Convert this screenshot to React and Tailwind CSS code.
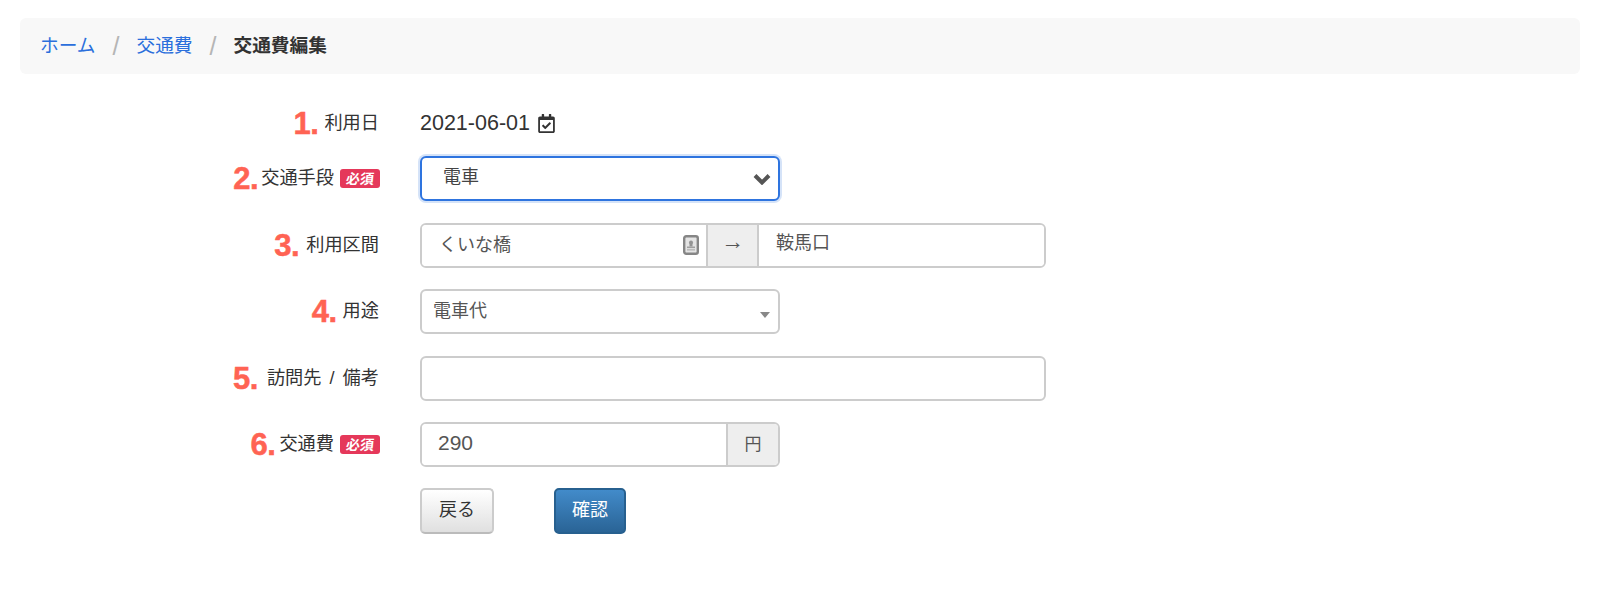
import React from "react";
import { FaRegCalendarCheck } from "react-icons/fa";

const font = '"Liberation Sans", "Noto Sans CJK JP", sans-serif';

function Req() {
  return (
    <span className="ml-[6px] flex h-[19px] w-[40px] items-center justify-center rounded-[3px] bg-[#e5385a] text-[14px] font-bold leading-none text-white">
      <span className="inline-block -skew-x-6">必須</span>
    </span>
  );
}

function Label({ n, text, req, gap }) {
  return (
    <div className="flex w-[380px] shrink-0 items-center justify-end">
      <span className={`${gap} text-[31px] font-bold leading-none tracking-[-0.5px] text-[#ff6353] [-webkit-text-stroke:0.5px_#ff6353]`}>{n}.</span>
      <span className="whitespace-nowrap text-[18.2px] leading-none text-[#333] [word-spacing:3px]">{text}</span>
      {req ? <Req /> : <span className="w-px" />}
    </div>
  );
}

function Row({ children }) {
  return <div className="flex h-[45px] items-center">{children}</div>;
}

export default function App() {
  return (
    <div className="h-[600px] w-[1600px] bg-white pt-[18px] text-[#333]" style={{ fontFamily: font }}>
      <nav className="mx-[20px] flex h-[56px] w-[1560px] items-center rounded-[6px] bg-[#f8f8f8] pl-[20px] text-[18.7px] leading-none">
        <a className="text-[#2b6fdc]">ホーム</a>
        <span className="mx-[17px] text-[25px] text-[#b5b5b5]">/</span>
        <a className="text-[#2b6fdc]">交通費</a>
        <span className="mx-[17px] text-[25px] text-[#b5b5b5]">/</span>
        <strong className="font-bold text-[#333]">交通費編集</strong>
      </nav>

      <form className="mt-[26.5px] flex flex-col gap-[21.5px]">
        <div className="mb-[-11px] flex h-[45px] items-center">
          <Label n="1" text="利用日" gap="mr-[6px]" />
          <div className="ml-[40px] flex items-center text-[21.5px] text-[#333]">
            2021-06-01
            <FaRegCalendarCheck className="ml-[7px] text-[19px] text-[#333]" />
          </div>
        </div>

        <Row>
          <Label n="2" text="交通手段" req gap="mr-[3px]" />
          <div className="relative ml-[40px] h-[45px] w-[360px]">
            <select className="h-full w-full appearance-none rounded-[6px] border-2 border-[#2e74df] bg-white pb-[2px] pl-[21px] text-[18px] text-[#444] shadow-[0_0_0_2px_#d5e3f8] outline-none">
              <option>電車</option>
            </select>
            <svg className="absolute right-[9px] top-[17px]" width="18" height="12" viewBox="0 0 18 12">
              <path d="M2 2.5 L9 9.5 L16 2.5" fill="none" stroke="#555" strokeWidth="4" />
            </svg>
          </div>
        </Row>

        <Row>
          <Label n="3" text="利用区間" gap="mr-[7px]" />
          <div className="ml-[40px] flex h-[45px] w-[626px] overflow-hidden rounded-[6px] border-2 border-[#ccc]">
            <div className="relative w-[284px]">
              <input readOnly value="くいな橋" className="h-full w-full bg-white pb-[4px] pl-[17px] text-[18px] text-[#555] outline-none" />
              <svg className="absolute right-[7px] top-[10px]" width="16" height="20" viewBox="0 0 16 20">
                <rect x="1.2" y="1.2" width="13.6" height="17.6" rx="2" fill="#e4e4e4" stroke="#868686" strokeWidth="2.4" />
                <circle cx="8" cy="7.5" r="2" fill="#949494" />
                <rect x="6.5" y="8" width="3" height="3.5" fill="#949494" />
                <rect x="4" y="11.5" width="8" height="1.6" fill="#a0a0a0" />
                <rect x="4" y="14" width="8" height="1.6" fill="#bcbcbc" />
              </svg>
            </div>
            <div className="flex w-[53px] items-center justify-center border-x-2 border-[#ccc] bg-[#eee] pb-[7px] text-[23px] leading-none text-[#555]">→</div>
            <input readOnly value="鞍馬口" className="min-w-0 flex-1 bg-white pb-[4px] pl-[17px] text-[18px] text-[#555] outline-none" />
          </div>
        </Row>

        <Row>
          <Label n="4" text="用途" gap="mr-[6px]" />
          <div className="relative ml-[40px] h-[45px] w-[360px]">
            <select className="h-full w-full appearance-none rounded-[6px] border-2 border-[#ccc] bg-white pl-[11px] text-[18px] text-[#555] outline-none">
              <option>電車代</option>
            </select>
            <span className="absolute right-[10px] top-[23px] h-0 w-0 border-x-[5px] border-t-[6px] border-x-transparent border-t-[#888]" />
          </div>
        </Row>

        <Row>
          <Label n="5" text="訪問先 / 備考" gap="mr-[9px]" />
          <input readOnly className="ml-[40px] h-[45px] w-[626px] rounded-[6px] border-2 border-[#ccc] bg-white outline-none" />
        </Row>

        <Row>
          <Label n="6" text="交通費" req gap="mr-[4px]" />
          <div className="ml-[40px] flex h-[45px] w-[360px] overflow-hidden rounded-[6px] border-2 border-[#ccc]">
            <input readOnly value="290" className="min-w-0 flex-1 bg-white pb-[3px] pl-[16px] text-[21px] text-[#555] outline-none" />
            <div className="flex w-[52px] items-center justify-center border-l-2 border-[#ccc] bg-[#eee] text-[17px] text-[#555]">円</div>
          </div>
        </Row>

        <div className="mt-[-1px] flex h-[46px] pl-[420px]">
          <button type="button" className="h-[46px] w-[74px] rounded-[5px] border-2 border-[#ccc] border-b-[#bbb] bg-gradient-to-b from-white to-[#e0e0e0] text-[18px] text-[#333]">戻る</button>
          <button type="button" className="ml-[60px] h-[46px] w-[72px] rounded-[5px] border-2 border-[#27608f] bg-gradient-to-b from-[#428bca] to-[#2a6496] text-[18px] text-white">確認</button>
        </div>
      </form>
    </div>
  );
}
